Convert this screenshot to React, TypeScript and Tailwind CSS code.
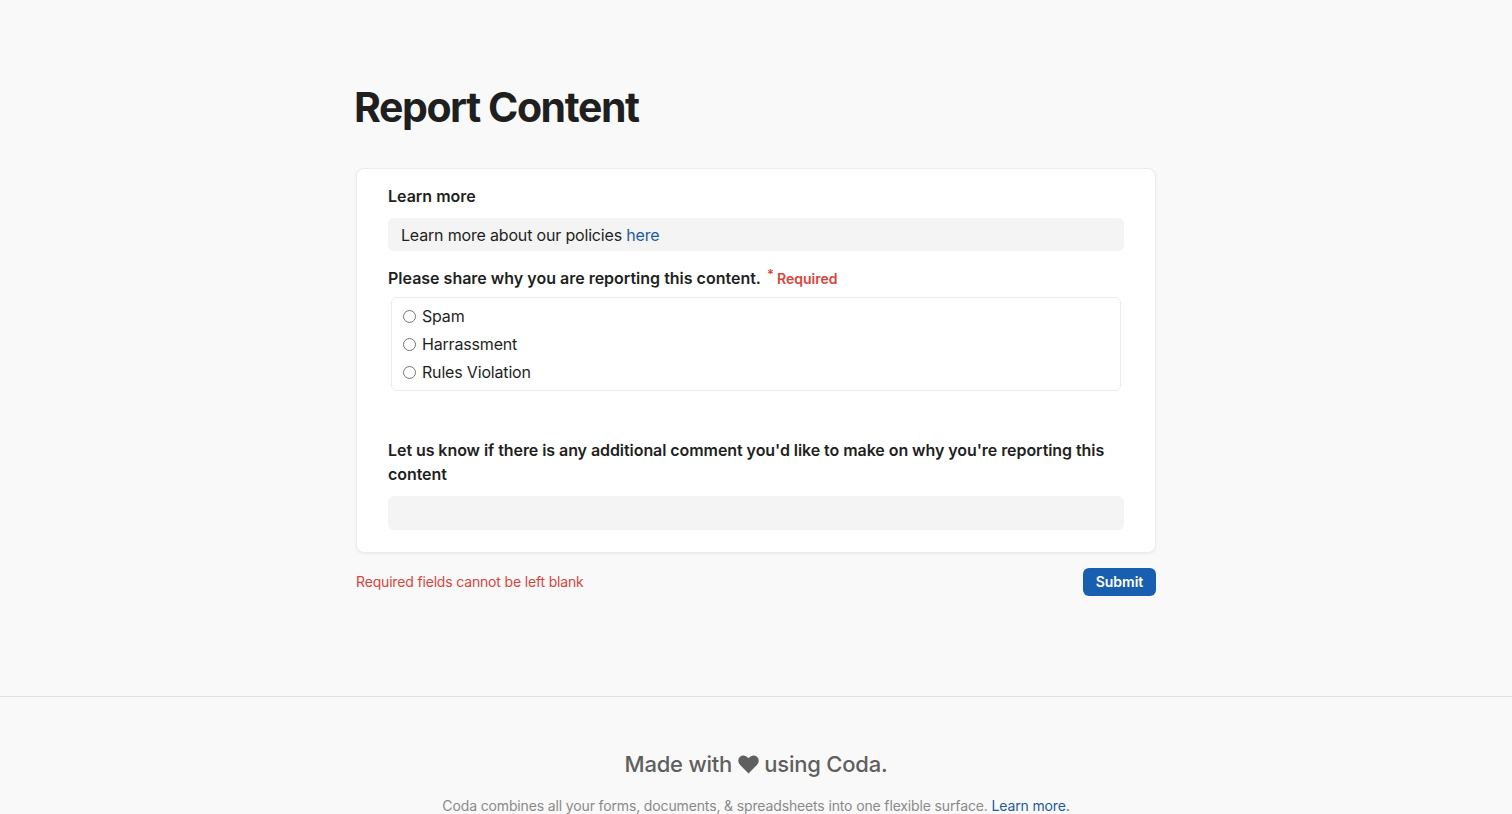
import React from "react";

const options = ["Spam", "Harrassment", "Rules Violation"];

function Heart() {
  return (
    <svg viewBox="0 0 24 22" className="inline-block h-[19px] w-[21px] align-[-2px]" fill="#5f5f5f">
      <path d="M12 21.5 2.3 11.6C-.5 8.7-.5 4.2 2.3 1.9 4.9-.3 8.8.2 12 3.8 15.2.2 19.1-.3 21.7 1.9c2.8 2.3 2.8 6.8 0 9.7L12 21.5z" />
    </svg>
  );
}

export default function App() {
  return (
    <div className="min-h-screen bg-[#f9f9f9] text-[#1f1f1f]" style={{ fontFamily: "Inter, 'Noto Sans', sans-serif" }}>
      <main className="mx-auto w-[802px] pt-[82px]">
        <h1 className="-ml-px text-[41px] font-bold leading-[50px] tracking-[-0.035em] text-[#1f1f1f]">Report Content</h1>

        {/* form card */}
        <div className="mx-px mt-[36px] rounded-lg border border-[#ececec] bg-white px-[31px] pb-[22px] pt-[15px] shadow-[0_1px_3px_rgba(0,0,0,0.06)]">
          <div className="text-base font-semibold leading-6">Learn more</div>
          <div className="mt-[10px] flex h-[33px] items-center rounded-md bg-[#f4f4f4] px-[13px] text-base tracking-[-0.011em]">
            Learn more about our policies&nbsp;<a className="text-[#1d5ba6]">here</a>
          </div>

          <div className="mt-[15px] flex items-baseline text-base font-semibold leading-6">
            Please share why you are reporting this content.
            <span className="ml-[6px] self-start text-[13px] leading-4 text-[#d9453c]">*</span>
            <span className="ml-[3px] text-sm text-[#d9453c]">Required</span>
          </div>
          <div className="ml-[3px] mr-[3px] mt-[7px] rounded-md border border-[#ececec] px-[11px] py-[4px]">
            {options.map((o) => (
              <label key={o} className="flex h-[28px] items-center gap-[6px] text-base tracking-[-0.011em]">
                <span className="h-[13px] w-[13px] rounded-full border border-[#767676] bg-white" />
                {o}
              </label>
            ))}
          </div>

          <div className="mt-[47px] text-base font-semibold leading-6 tracking-[-0.004em]">
            Let us know if there is any additional comment you'd like to make on why you're reporting this content
          </div>
          <div className="mt-[10px] h-[34px] rounded-md bg-[#f4f4f4]" />
        </div>

        <div className="mx-px mt-[15px] flex items-center justify-between">
          <span className="text-sm tracking-[-0.012em] text-[#d9453c]">Required fields cannot be left blank</span>
          <button className="h-[28px] w-[73px] rounded-md bg-[#195fb0] text-sm font-semibold text-white">Submit</button>
        </div>
      </main>

      <footer className="mt-[100px] border-t border-[#e0e0e0] pb-6 pt-[51px] text-center">
        <div className="text-[22px] font-medium leading-8 tracking-[-0.01em] text-[#5f5f5f]">
          Made with <Heart /> using Coda.
        </div>
        <div className="mt-[16px] text-sm tracking-[-0.01em] text-[#8a8a8a]">
          Coda combines all your forms, documents, &amp; spreadsheets into one flexible surface.{" "}
          <a className="text-[#1d5ba6]">Learn more.</a>
        </div>
      </footer>
    </div>
  );
}
